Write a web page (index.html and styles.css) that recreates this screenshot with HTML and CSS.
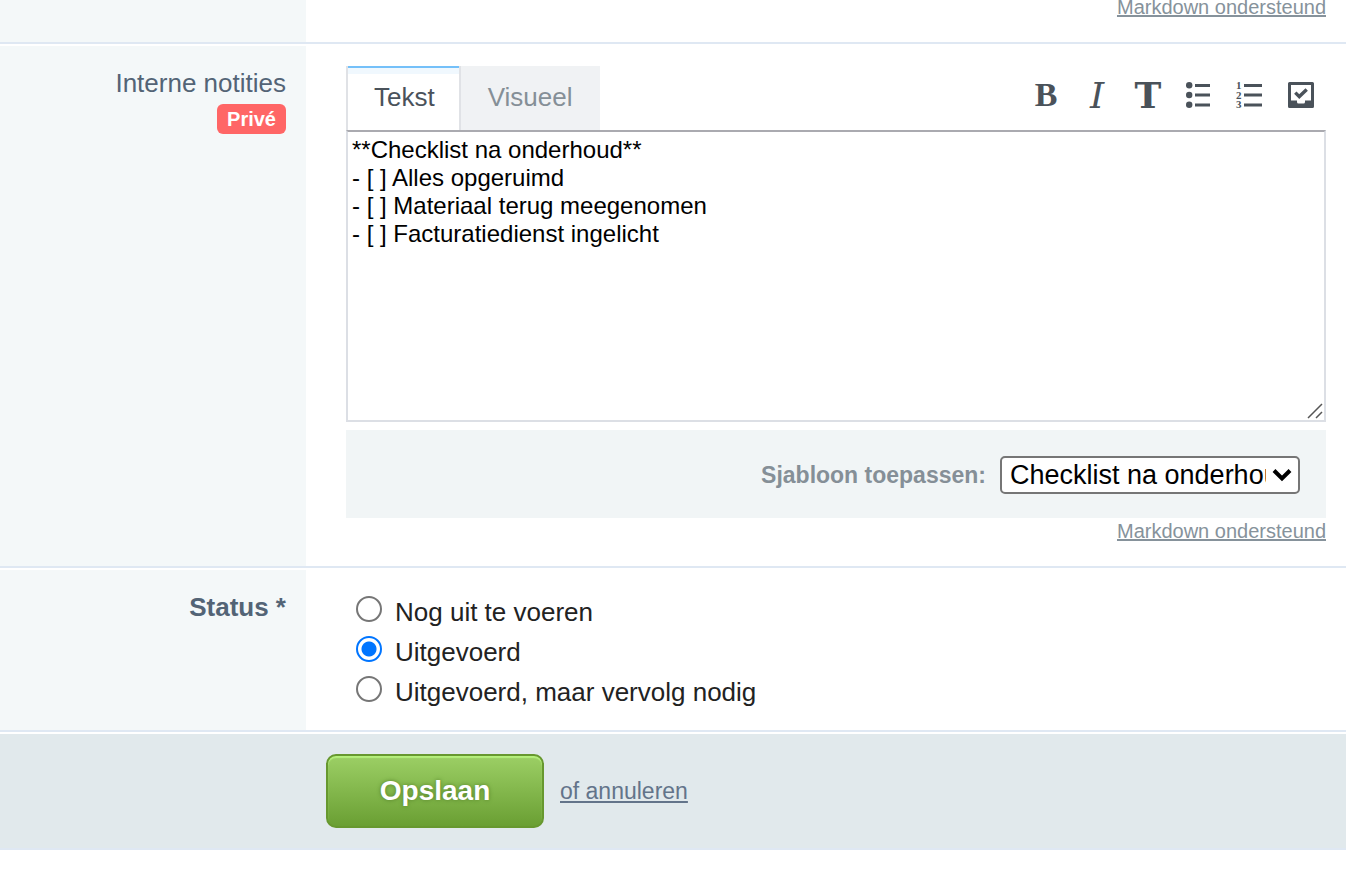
FILE: index.html
```html
<!DOCTYPE html>
<html lang="nl">
    <head>
        <meta charset="utf-8" />
        <meta name="viewport" content="width=device-width, initial-scale=1" />
        <title>Interne notities</title>
        <link rel="stylesheet" href="styles.css">
    </head>
    <body>
        <form>
            <div class="row row-previous">
                <div class="label"></div>
                <div class="field">
                    <a class="markdown" href="#markdown">Markdown ondersteund</a>
                </div>
            </div>

            <div class="row">
                <div class="label">
                    <label for="notities">Interne notities</label>
                    <span class="badge">Privé</span>
                </div>
                <div class="field">
                    <div class="editor-head">
                        <div class="tabs">
                            <button type="button" class="tab active">Tekst</button>
                            <button type="button" class="tab">Visueel</button>
                        </div>
                        <div class="tools">
                            <button type="button" class="tool bold" aria-label="Vet">B</button>
                            <button type="button" class="tool italic" aria-label="Cursief">I</button>
                            <button type="button" class="tool heading" aria-label="Titel">T</button>
                            <button type="button" class="tool" aria-label="Lijst">
                                <svg width="26" height="26" viewBox="0 0 26 26" fill="currentColor">
                                    <circle cx="3.2" cy="3.2" r="3.2"/><circle cx="3.2" cy="13" r="3.2"/><circle cx="3.2" cy="22.8" r="3.2"/>
                                    <path d="M9 2h15v3H9zM9 11.500h15v3H9zM9 21.500h15v3H9z"/>
                                </svg>
                            </button>
                            <button type="button" class="tool" aria-label="Genummerde lijst">
                                <svg width="26" height="26" viewBox="0 0 26 26" fill="currentColor">
                                    <text class="num" x="-1" y="7">1</text>
                                    <text class="num" x="-1" y="17">2</text>
                                    <text class="num" x="-1" y="26">3</text>
                                    <path d="M7 2h18v3H7zM7 11.500h18v3H7zM7 21.500h18v3H7z"/>
                                </svg>
                            </button>
                            <button type="button" class="tool" aria-label="Checklist">
                                <svg width="26" height="26" viewBox="0 0 26 26">
                                    <path fill="currentColor" fill-rule="evenodd" d="M1.500 0h23A1.500 1.500 0 0 1 26 1.500v23a1.500 1.500 0 0 1-1.500 1.500h-23A1.500 1.500 0 0 1 0 24.500v-23A1.500 1.500 0 0 1 1.500 0zM3 3v15.500h6V20q0 1.500 1.500 1.500h5Q17 21.500 17 20v-1.500h6V3z"/>
                                    <path fill="none" stroke="currentColor" stroke-width="3.400" d="M7.300 10.600l4 4L18.700 7.600"/>
                                </svg>
                            </button>
                        </div>
                    </div>
                    <div class="textbox">
<textarea id="notities" spellcheck="false">
**Checklist na onderhoud**
- [ ] Alles opgeruimd
- [ ] Materiaal terug meegenomen
- [ ] Facturatiedienst ingelicht</textarea>
                        <svg class="grip" width="16" height="16" viewBox="0 0 16 16" fill="none" stroke="#555" stroke-width="1.500">
                            <path d="M1 15L15 1M9 15l6-6"/>
                        </svg>
                    </div>
                    <div class="template">
                        <label for="sjabloon">Sjabloon toepassen:</label>
                        <div class="select">
                            <select id="sjabloon">
                                <option>Checklist na onderhoud</option>
                            </select>
                            <svg class="arrow" width="20" height="14" viewBox="0 0 20 14" fill="none" stroke="#000" stroke-width="4">
                                <path d="M2 2.500l8 8 8-8"/>
                            </svg>
                        </div>
                    </div>
                    <a class="markdown" href="#markdown">Markdown ondersteund</a>
                </div>
            </div>

            <div class="row">
                <div class="label required">Status *</div>
                <div class="field options">
                    <label><input type="radio" name="status"> Nog uit te voeren</label>
                    <label><input type="radio" name="status" checked> Uitgevoerd</label>
                    <label><input type="radio" name="status"> Uitgevoerd, maar vervolg nodig</label>
                </div>
            </div>

            <div class="actions">
                <button type="submit" class="save">Opslaan</button>
                <a href="#annuleren">of annuleren</a>
            </div>
        </form>
    </body>
</html>
```

FILE: styles.css
```css
* { margin: 0; padding: 0; box-sizing: border-box; }
body { font-family: "Liberation Sans", Arial, sans-serif; font-size: 26px; color: #222; background: #fff; }
button, select, textarea { font-family: inherit; }

/* form rows */
.row { display: flex; border-bottom: 2px solid #dfe8f3; margin-bottom: 2px; }
.row-previous { margin-top: -6px; }
.label {
    flex: none;
    width: 306px;
    padding: 20px 20px 0 0;
    line-height: 34px;
    text-align: right;
    color: #536476;
    background: #f4f8f9; }
.label label { display: block; }
.required { font-weight: bold; }
.badge {
    display: inline-block;
    padding: 0 10px;
    border-radius: 6px;
    font-size: 20px;
    font-weight: bold;
    line-height: 30px;
    vertical-align: top;
    margin-top: 4px;
    color: #fff;
    background: #ff6666; }
.field { flex: 1; min-width: 0; padding: 20px 20px 22px 40px; }
.row-previous .field { padding-top: 0; }
.markdown { display: block; width: fit-content; margin-left: auto; font-size: 20px; line-height: 26px; color: #86929b; }

/* editor */
.editor-head { display: flex; justify-content: space-between; }
.tabs { display: flex; }
.tab {
    height: 64px;
    padding: 0 27px 2px;
    border: 0;
    font-size: 26px;
    color: #858f97;
    background: #f0f2f4; }
.tab.active {
    padding: 0 24px 2px 26px;
    border: solid #e0e2e6;
    border-width: 0 2px;
    color: #4a525b;
    background: linear-gradient(#74c0f9 2px, #f0f8fe 2px, #f0f8fe 8px, #fff 8px); }
.tools { display: flex; align-items: center; gap: 15px; padding: 0 7px 6px 0; }
.tool {
    display: flex;
    align-items: center;
    justify-content: center;
    width: 36px;
    height: 36px;
    border: 0;
    color: #4a525a;
    background: none; }
.tool svg { overflow: visible; }
.bold { font: bold 34px "Liberation Serif", serif; }
.italic { font: italic 36px "DejaVu Serif", serif; }
.heading { font: bold 36px "DejaVu Serif", serif; }
.num { font: bold 11px "Liberation Serif", serif; }

.textbox { position: relative; height: 292px; }
textarea {
    display: block;
    width: 100%;
    height: 100%;
    padding: 4px;
    border: 2px solid #dcdfe5;
    border-top-color: #aaaab0;
    font-size: 24px;
    line-height: 28px;
    color: #000;
    resize: none; }
.grip { position: absolute; right: 3px; bottom: 3px; }

.template {
    display: flex;
    align-items: center;
    justify-content: flex-end;
    gap: 14px;
    height: 88px;
    margin-top: 8px;
    padding: 2px 26px 0 0;
    font-size: 23px;
    font-weight: bold;
    color: #858f97;
    background: #f1f5f6; }
.select { position: relative; width: 300px; }
select {
    appearance: none;
    display: block;
    width: 100%;
    height: 38px;
    padding: 0 32px 0 8px;
    border: 2px solid #767676;
    border-radius: 5px;
    font-size: 27px;
    color: #000;
    background: #fff; }
.arrow { position: absolute; right: 8px; top: 12px; pointer-events: none; }

/* status */
.options { display: flex; flex-direction: column; padding: 22px 20px 18px 50px; }
.options label { display: flex; gap: 13px; line-height: 40px; }
input[type=radio] {
    appearance: none;
    width: 26px;
    height: 26px;
    margin-top: 4px;
    border: 2px solid #767676;
    border-radius: 50%;
    background: #fff; }
input[type=radio]:checked { border-color: #0075ff; background: radial-gradient(circle, #0075ff 7px, #fff 8px); }

.actions {
    display: flex;
    align-items: center;
    gap: 16px;
    padding: 20px 20px 20px 326px;
    border-bottom: 2px solid #dfe8f3;
    background: #e1e9ec; }
.save {
    width: 218px;
    height: 74px;
    border: 2px solid #67982f;
    border-radius: 10px;
    font-size: 28px;
    font-weight: bold;
    color: #fff;
    text-shadow: 0 0 4px #55802a;
    background: linear-gradient(#9ccf65, #6a9f33);
    box-shadow: inset 0 2px 1px #b5f07c; }
.actions a { font-size: 23px; color: #63748a; }
```
